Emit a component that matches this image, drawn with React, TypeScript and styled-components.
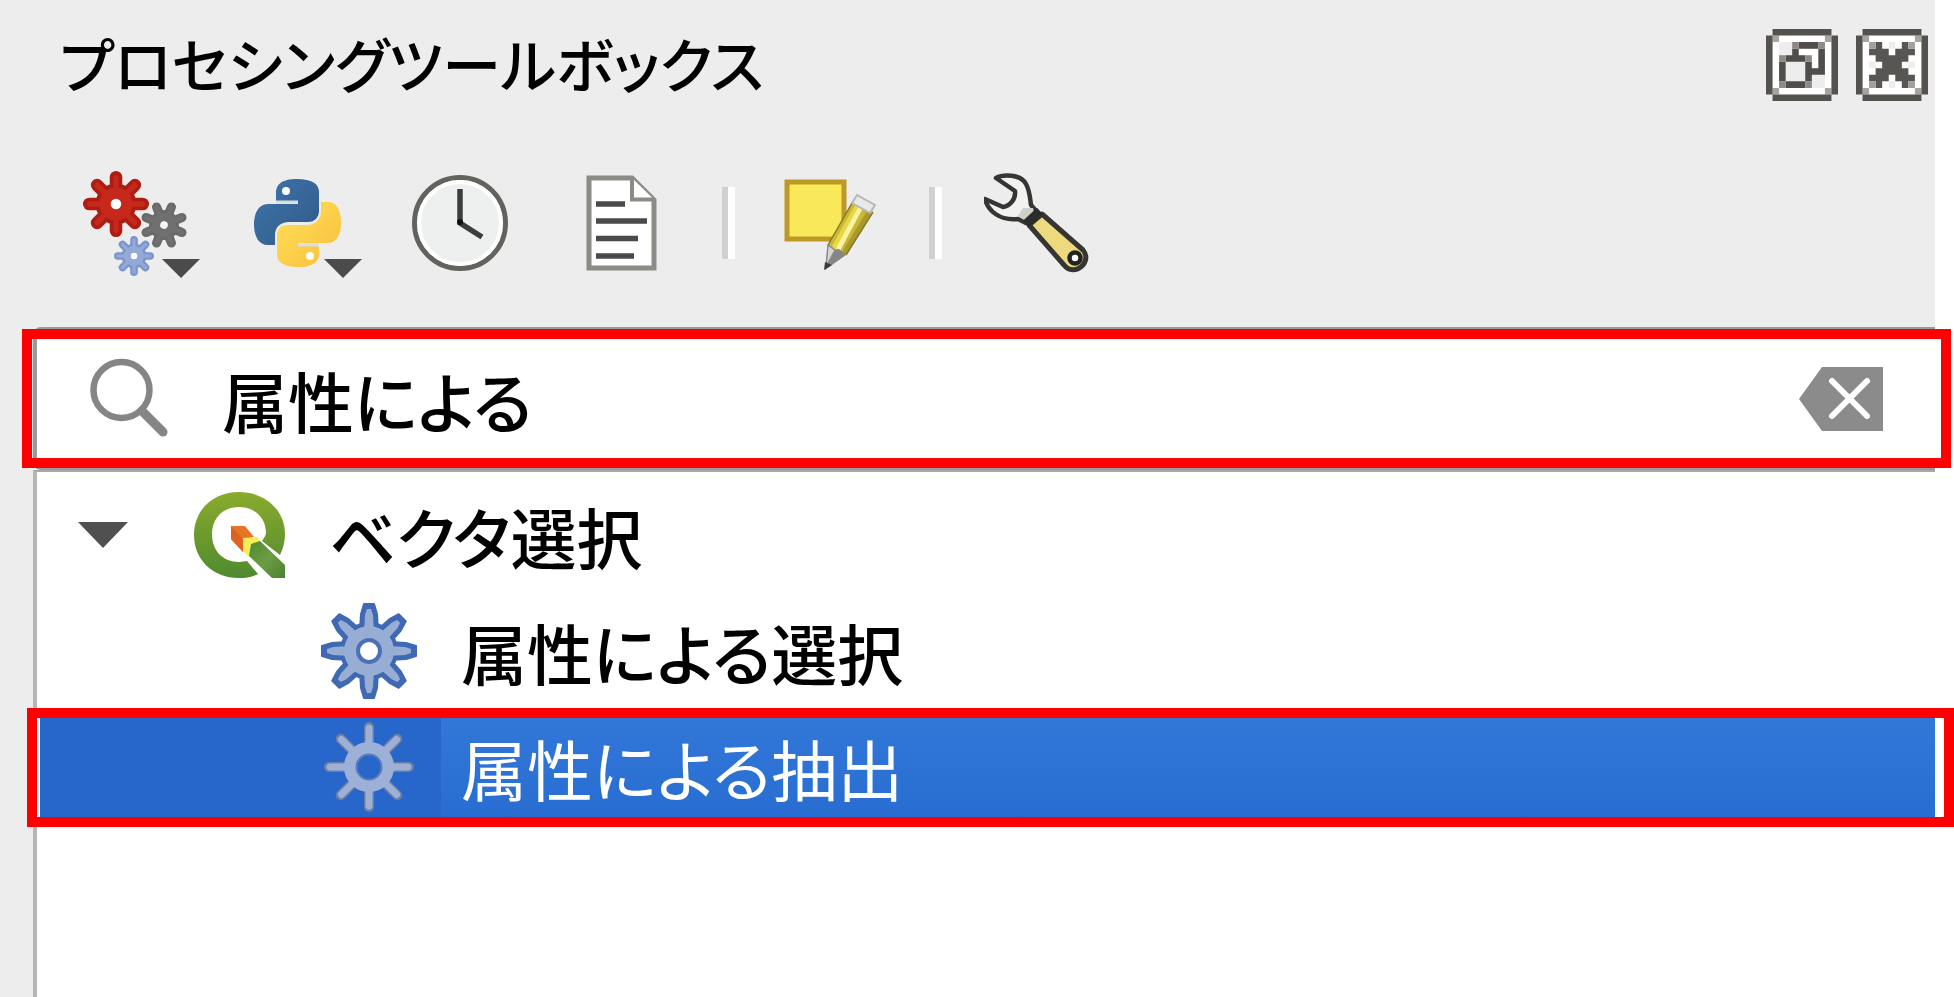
import React from "react";
import styled, { createGlobalStyle, css } from "styled-components";

const GlobalStyle = createGlobalStyle`
  *, *::before, *::after { box-sizing: border-box; }
  body {
    margin: 0;
    background: #ffffff;
    color: #000000;
    font-family: "Noto Sans CJK JP", "Noto Sans", sans-serif;
    font-weight: 500;
    font-feature-settings: "palt";
  }
`;

const Panel = styled.main`
  display: flex;
  flex-direction: column;
  min-height: 100vh;
  margin-right: 19px;
  background: #ededed;
`;

const TitleBar = styled.header`
  display: flex;
  align-items: center;
  justify-content: space-between;
  height: 129px;
  padding: 0 7px 0 60px;
`;

const Title = styled.h1`
  margin: 0;
  padding-bottom: 4px;
  font-size: 59px;
  line-height: 96px;
  font-weight: 500;
  white-space: nowrap;
`;

const WindowButtons = styled.div`
  display: flex;
  gap: 18px;
`;

const IconButton = styled.button`
  display: block;
  flex: none;
  padding: 0;
  border: 0;
  background: none;
  svg { display: block; }
`;

const Toolbar = styled.div`
  display: flex;
  align-items: center;
  gap: 42px;
  height: 198px;
  padding: 0 0 10px 80px;
`;

const Separator = styled.span`
  flex: none;
  width: 13px;
  height: 72px;
  border-left: 6px solid #d0d0d0;
  background: #ffffff;
`;

const SearchBox = styled.div`
  position: relative;
  display: flex;
  align-items: center;
  height: 143px;
  margin-left: 33px;
  padding: 0 52px 0 53px;
  border: 2px solid #9a9a9a;
  border-left-width: 4px;
  border-right: 0;
  border-radius: 8px 0 0 8px;
  background: #ffffff;
`;

const SearchInput = styled.input`
  flex: 1;
  min-width: 0;
  height: 100px;
  margin-left: 52px;
  padding: 0;
  border: 0;
  outline: 0;
  background: transparent;
  color: inherit;
  font: inherit;
  font-feature-settings: inherit;
  font-size: 66px;
  line-height: 100px;
`;

const Highlight = styled.span<{ $row?: boolean }>`
  position: absolute;
  inset: 0 -16px 0 -15px;
  border: 10px solid #ff0000;
  pointer-events: none;
  ${(p) => p.$row && css`inset: -1px -19px -2px -13px;`}
`;

const Tree = styled.ul`
  flex: 1;
  margin: 0 0 0 33px;
  padding: 5px 0 0 3px;
  border-top: 2px solid #a8a8a8;
  border-left: 4px solid #b6b6b6;
  background: #ffffff;
  list-style: none;
`;

const Group = styled.ul`
  margin: 0;
  padding: 0;
  list-style: none;
`;

const Row = styled.div<{ $selected?: boolean }>`
  position: relative;
  display: flex;
  align-items: stretch;
  height: 116px;
  font-size: 66px;
  line-height: 116px;
  white-space: nowrap;
  ${(p) =>
    p.$selected &&
    css`
      color: #ffffff;
      font-weight: 400;
      background: linear-gradient(#3278d8, #286cd1);
    `}
`;

const RowLead = styled.span<{ $width: number; $selected?: boolean }>`
  display: flex;
  align-items: center;
  justify-content: flex-end;
  flex: none;
  width: ${(p) => p.$width}px;
  padding-right: 24px;
  background: ${(p) => (p.$selected ? "#2766cb" : "transparent")};
  svg { display: block; }
`;

const LeadSpacer = styled.span`
  flex: none;
  width: 64px;
`;

const RowLabel = styled.span`
  padding-left: 20px;
`;

const toothAngles = [0, 45, 90, 135, 180, 225, 270, 315];

type GearProps = {
  cx: number;
  cy: number;
  r: number;
  fill: string;
  edge: string;
  hole: string;
  turn?: number;
};

/* Round-toothed gear used three times in the models icon. */
const SmallGear = ({ cx, cy, r, fill, edge, hole, turn = 0 }: GearProps) => (
  <g transform={`translate(${cx} ${cy}) rotate(${turn})`}>
    {toothAngles.map((a) => (
      <line key={a} x1="0" y1="0" x2="0" y2={-r * 0.81} stroke={edge} strokeWidth={r * 0.38} strokeLinecap="round" transform={`rotate(${a})`} />
    ))}
    <circle r={r * 0.62} fill={edge} />
    {toothAngles.map((a) => (
      <line key={a} x1="0" y1="0" x2="0" y2={-r * 0.8} stroke={fill} strokeWidth={r * 0.16} strokeLinecap="round" transform={`rotate(${a})`} />
    ))}
    <circle r={r * 0.5} fill={fill} />
    <circle r={r * 0.16} fill={hole} />
  </g>
);

const Models = () => (
  <svg width="126" height="120" viewBox="80 163 126 120">
    <SmallGear cx={164} cy={225} r={24} fill="#707070" edge="#6a6a6a" hole="#f5f5f5" turn={22.5} />
    <SmallGear cx={116} cy={204} r={33} fill="#c6281c" edge="#ad1d12" hole="#ffffff" />
    <SmallGear cx={134} cy={256} r={20} fill="#94a9d8" edge="#7b95cd" hole="#ffffff" />
    <path d="M162 259H200L181 278Z" fill="#4b4b4b" />
  </svg>
);

const Python = () => (
  <svg width="118" height="120" viewBox="248 163 118 120">
    <defs>
      <linearGradient id="pyBlue" x1="0" y1="0" x2="1" y2="1">
        <stop offset="0" stopColor="#3f75ad" />
        <stop offset="1" stopColor="#305986" />
      </linearGradient>
      <linearGradient id="pyGold" x1="0" y1="0" x2="1" y2="1">
        <stop offset="0" stopColor="#ffe05a" />
        <stop offset="1" stopColor="#f9bf3a" />
      </linearGradient>
    </defs>
    <path d="M297 179C281 179 276 185 276 193V201H298V204H268C258 204 254 214 254 224C254 237 259 245 268 245H275V235C275 227 281 222 289 222H308C315 222 319 217 319 211V192C319 184 312 179 297 179Z" fill="url(#pyBlue)" />
    <path d="M298 267C314 267 319 261 319 254V246H298V243H327C337 243 341 235 341 223C341 210 337 202 328 202H321V211C321 219 315 225 307 225H287C280 225 277 230 277 235V254C277 262 283 267 298 267Z" fill="url(#pyGold)" />
    <circle cx="286" cy="191" r="4" fill="#ffffff" />
    <circle cx="310" cy="256" r="4" fill="#ffffff" />
    <path d="M276 202H298M298 245H319" stroke="#d9dfdf" strokeWidth="3" />
    <path d="M324 259H362L343 278Z" fill="#4b4b4b" />
  </svg>
);

const History = () => (
  <svg width="106" height="120" viewBox="408 163 106 120">
    <circle cx="460" cy="223" r="45.5" fill="#edf0ef" stroke="#62635e" strokeWidth="5" />
    <circle cx="460" cy="223" r="41" fill="none" stroke="#ffffff" strokeWidth="4" />
    <path d="M460 189V223L482 237" fill="none" stroke="#3c3e3c" strokeWidth="5.500" />
    <circle cx="460" cy="222" r="3" fill="#111111" />
  </svg>
);

const Results = () => (
  <svg width="124" height="120" viewBox="556 163 124 120">
    <path d="M589 178H632L654 200V268H589Z" fill="#ffffff" stroke="#8b8c86" strokeWidth="5" />
    <path d="M632 178V199.500H654" fill="#ffffff" stroke="#8b8c86" strokeWidth="4" />
    <path d="M596 204H625M596 221H647M596 238.500H638M596 256H634" stroke="#4a4a4a" strokeWidth="5.500" />
  </svg>
);

const EditInPlace = () => (
  <svg width="110" height="120" viewBox="777 163 110 120">
    <rect x="787" y="182" width="57" height="57" fill="#f9e85a" stroke="#bd9a25" strokeWidth="5" />
    <path d="M828 245L852 203L873 213L846 255Z" fill="#c9b736" />
    <path d="M832 246L855 205L860 207L836 250Z" fill="#e7d944" />
    <path d="M836 248L859 206L863 208L840 251Z" fill="#fbf3a4" />
    <path d="M846 255L873 210L869 208L842 252Z" fill="#a9982d" />
    <path d="M828 245L852 203M846 255L873 212" stroke="#887923" strokeWidth="1.500" />
    <path d="M852 203L857 195L875 205L870 213Z" fill="#e9e9e9" stroke="#b7b7b7" strokeWidth="2" />
    <path d="M828 245L834 250L839 249L846 255L825 270Z" fill="#858585" />
    <path d="M828 245L835 250L826 267Z" fill="#d5d5d5" stroke="#8b8b8b" strokeWidth="1.500" />
    <path d="M824 270L825 262L832 265Z" fill="#3c3c3c" />
  </svg>
);

const Options = () => (
  <svg width="106" height="120" viewBox="984 163 106 120">
    <path d="M1029 225L1064 265C1074 278 1093 262 1083 250L1042 214Z" fill="#eeda7e" stroke="#353533" strokeWidth="5" strokeLinejoin="round" />
    <path d="M996 178C1003 174 1021 174 1026 184C1030 191 1030 199 1031 205L1036 211L1026 223L1018 219C1000 221 988 211 985 199L1003 207C1010 206 1016 199 1015 191Z" fill="#f2f3f1" stroke="#353533" strokeWidth="4.500" strokeLinejoin="round" />
    <path d="M1023 208L1033 208L1034 212L1026 221L1018 216Z" fill="#cdd1ca" />
    <path d="M1026 224L1040 211" stroke="#2c2c2c" strokeWidth="9" />
    <circle cx="1075" cy="258" r="5.500" fill="#ffffff" stroke="#222222" strokeWidth="4.500" />
  </svg>
);

/* Pixel-art frame shared by the two dock buttons: an 11 by 11 cell grid. */
const DockFrame = ({ children }: { children: React.ReactNode }) => (
  <svg width="72" height="72" viewBox="0 0 11 11">
    <path d="M1 1H10V10H1Z" fill="#ffffff" />
    <path d="M2 2H9V9H2Z" fill="#ededed" />
    <path d="M1 1H2V2H1ZM9 1H10V2H9ZM1 9H2V10H1ZM9 9H10V10H9Z" fill="#aaa29f" />
    <path d="M1 0H10V1H1ZM1 10H10V11H1ZM0 1H1V10H0ZM10 1H11V10H10Z" fill="#54524e" />
    {children}
  </svg>
);

const FloatIcon = () => (
  <DockFrame>
    <path d="M5 3H8V6H7V4H5Z" fill="#ffffff" />
    <path d="M5 2H8V3H5ZM4 3H5V4H4ZM8 3H9V6H8ZM7 6H9V7H7ZM3 4H6V5H3ZM3 8H6V9H3ZM2 5H3V8H2ZM6 5H7V8H6Z" fill="#4f4e4a" />
    <path d="M4 2H5V3H4ZM8 2H9V3H8ZM2 4H3V5H2ZM6 4H7V5H6ZM2 8H3V9H2ZM6 8H7V9H6Z" fill="#8f8884" />
  </DockFrame>
);

const CloseIcon = () => (
  <DockFrame>
    <path d="M2 2H9V9H2Z" fill="#ffffff" />
    <path d="M5 2H6V3H5ZM5 8H6V9H5ZM2 5H3V6H2ZM8 5H9V6H8Z" fill="#ededed" />
    <path d="M3 2H4V3H5V4H6V3H7V2H8V3H9V4H8V5H7V6H8V7H9V8H8V9H7V8H6V7H5V8H4V9H3V8H2V7H3V6H4V5H3V4H2V3H3Z" fill="#575652" />
    <path d="M2 2H3V3H2ZM8 2H9V3H8ZM2 8H3V9H2ZM8 8H9V9H8Z" fill="#a49d99" />
  </DockFrame>
);

const SearchIcon = () => (
  <svg width="80" height="84" viewBox="90 357 80 84">
    <circle cx="121.500" cy="390" r="28" fill="none" stroke="#858585" strokeWidth="6.500" />
    <path d="M142 411L163 432" stroke="#858585" strokeWidth="9" strokeLinecap="round" />
  </svg>
);

const ClearIcon = () => (
  <svg width="84" height="66" viewBox="0 0 84 66">
    <path d="M23 1H84V65H23L0 33Z" fill="#8b8b8b" />
    <path d="M33 15L68 50M68 15L33 50" stroke="#ffffff" strokeWidth="6" strokeLinecap="round" />
  </svg>
);

const ExpandIcon = () => (
  <svg width="52" height="28" viewBox="0 0 52 28">
    <path d="M1 1H51L26 27Z" fill="#505050" />
  </svg>
);

const QgisLogo = () => (
  <svg width="92" height="88" viewBox="193 490 92 88">
    <defs>
      <linearGradient id="ring" x1="0" y1="0" x2="0" y2="1">
        <stop offset="0" stopColor="#8aab2c" />
        <stop offset="1" stopColor="#4f8a30" />
      </linearGradient>
      <linearGradient id="stem" x1="0" y1="0" x2="1" y2="1">
        <stop offset="0" stopColor="#4f8a30" />
        <stop offset="0.500" stopColor="#6c9c46" />
        <stop offset="1" stopColor="#4a822e" />
      </linearGradient>
    </defs>
    <path fillRule="evenodd" d="M239 491C265 491 285 509 285 533C285 541 283 548 280 554L262 540C264 537 266 534 266 532C266 517 255 506 239 506C223 506 212 517 212 533C212 550 223 561 239 561C242 561 245 560 247 560L258 573C252 576 246 577 239 577C213 577 194 559 194 534C194 509 213 491 239 491Z" fill="url(#ring)" />
    <path d="M231 525H245L254 536L243 538L243 551L231 538Z" fill="#e6752a" />
    <path d="M231 525L243 538V551L231 538Z" fill="#dc6420" />
    <path d="M243 537L258 536L260 541L251 543L249 556L243 550Z" fill="#f4ed55" />
    <path d="M251 543L260 540L285 564V577H272L249 555Z" fill="url(#stem)" />
  </svg>
);

const AlgorithmIcon = ({ selected = false }: { selected?: boolean }) => (
  <svg width="96" height="96" viewBox="-48 -48 96 96">
    {!selected && (
      <g fill="#4069b3" stroke="#4069b3" strokeWidth="2" strokeLinejoin="round">
        {toothAngles.map((a) => (
          <path key={a} d="M-9 -20L-8 -37L-5 -47H5L8 -37L9 -20Z" transform={`rotate(${a})`} />
        ))}
        <circle r="28" />
      </g>
    )}
    {selected ? (
      <>
        {toothAngles.map((a) => (
          <path key={a} d="M0 -20V-40" stroke="#707f9f" strokeWidth="10" strokeLinecap="round" transform={`rotate(${a})`} />
        ))}
        {toothAngles.map((a) => (
          <path key={a} d="M0 -20V-39" stroke="#9cb0d8" strokeWidth="7" strokeLinecap="round" transform={`rotate(${a})`} />
        ))}
        <circle r="19" fill="none" stroke="#9cb0d8" strokeWidth="12" />
        <circle r="12.500" fill="none" stroke="#5c7cb8" strokeWidth="2" />
      </>
    ) : (
      <>
        {toothAngles.map((a) => (
          <path key={a} d="M-5 -18L-4 -36L-2 -42H2L4 -36L5 -18Z" fill="#97add4" transform={`rotate(${a})`} />
        ))}
        <circle r="25" fill="#97add4" />
        <circle r="11" fill="#ffffff" stroke="#4a71b8" strokeWidth="4" />
      </>
    )}
  </svg>
);

const App = () => (
  <>
    <GlobalStyle />
    <Panel>
      <TitleBar>
        <Title>プロセシングツールボックス</Title>
        <WindowButtons>
          <IconButton aria-label="フロート"><FloatIcon /></IconButton>
          <IconButton aria-label="閉じる"><CloseIcon /></IconButton>
        </WindowButtons>
      </TitleBar>

      <Toolbar role="toolbar">
        <IconButton aria-label="モデル"><Models /></IconButton>
        <IconButton aria-label="スクリプト"><Python /></IconButton>
        <IconButton aria-label="履歴"><History /></IconButton>
        <IconButton aria-label="結果ビューア"><Results /></IconButton>
        <Separator />
        <IconButton aria-label="その場で編集"><EditInPlace /></IconButton>
        <Separator />
        <IconButton aria-label="オプション"><Options /></IconButton>
      </Toolbar>

      <SearchBox>
        <SearchIcon />
        <SearchInput type="text" aria-label="検索" defaultValue="属性による" />
        <IconButton aria-label="クリア"><ClearIcon /></IconButton>
        <Highlight />
      </SearchBox>

      <Tree role="tree">
        <li role="treeitem" aria-expanded="true">
          <Row>
            <RowLead $width={269}>
              <IconButton aria-label="折りたたむ"><ExpandIcon /></IconButton>
              <LeadSpacer />
              <QgisLogo />
            </RowLead>
            <RowLabel>ベクタ選択</RowLabel>
          </Row>
          <Group role="group">
            <li role="treeitem">
              <Row>
                <RowLead $width={401}><AlgorithmIcon /></RowLead>
                <RowLabel>属性による選択</RowLabel>
              </Row>
            </li>
            <li role="treeitem" aria-selected="true">
              <Row $selected>
                <RowLead $width={401} $selected><AlgorithmIcon selected /></RowLead>
                <RowLabel>属性による抽出</RowLabel>
                <Highlight $row />
              </Row>
            </li>
          </Group>
        </li>
      </Tree>
    </Panel>
  </>
);

export default App;
